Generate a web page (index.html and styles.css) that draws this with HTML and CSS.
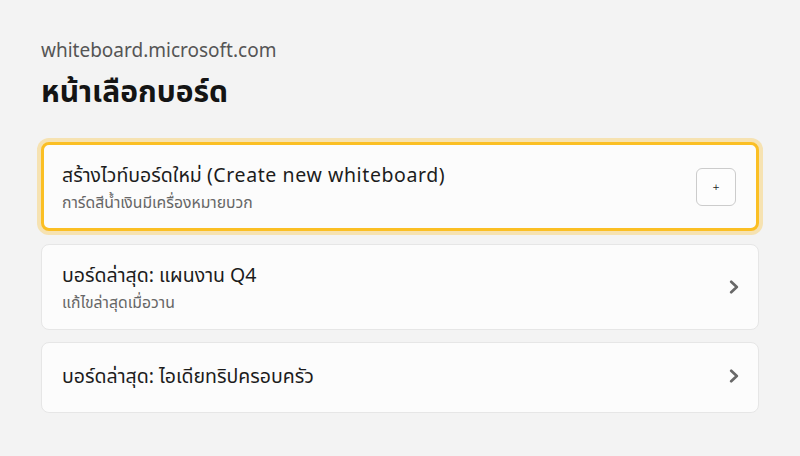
FILE: index.html
```html
<!DOCTYPE html>
<html lang="th">
<head>
<meta charset="utf-8">
<title>หน้าเลือกบอร์ด</title>
<link rel="stylesheet" href="styles.css">
</head>
<body>
<main class="page">
  <div class="domain">whiteboard.microsoft.com</div>
  <h1 class="heading">หน้าเลือกบอร์ด</h1>
  <ul class="list">
    <li class="card card-new">
      <div class="text">
        <div class="title">สร้างไวท์บอร์ดใหม่ <span class="latin">(Create new whiteboard)</span></div>
        <div class="sub">การ์ดสีน้ำเงินมีเครื่องหมายบวก</div>
      </div>
      <button class="add" type="button">+</button>
    </li>
    <li class="card">
      <div class="text">
        <div class="title">บอร์ดล่าสุด: แผนงาน Q4</div>
        <div class="sub">แก้ไขล่าสุดเมื่อวาน</div>
      </div>
      <svg class="chev" width="10" height="14" viewBox="0 0 10 14" aria-hidden="true"><path d="M2.2 1.8 L7.8 7 L2.2 12.2" fill="none" stroke="#686868" stroke-width="2.7" stroke-linecap="round" stroke-linejoin="round"/></svg>
    </li>
    <li class="card card-single">
      <div class="text">
        <div class="title">บอร์ดล่าสุด: ไอเดียทริปครอบครัว</div>
      </div>
      <svg class="chev" width="10" height="14" viewBox="0 0 10 14" aria-hidden="true"><path d="M2.2 1.8 L7.8 7 L2.2 12.2" fill="none" stroke="#686868" stroke-width="2.7" stroke-linecap="round" stroke-linejoin="round"/></svg>
    </li>
  </ul>
</main>
</body>
</html>
```
FILE: styles.css
```css
html, body {
  margin: 0;
  padding: 0;
  background: #f3f3f3;
}
body {
  font-family: "Noto Sans", "Noto Sans Thai", sans-serif;
  color: #1c1c1c;
}
.page {
  padding: 38px 41px 0 41px;
}
.domain {
  font-size: 19px;
  line-height: 24px;
  color: #555555;
}
.heading {
  margin: 11px 0 0 0;
  font-size: 30px;
  line-height: 36px;
  font-weight: 700;
  color: #141414;
}
.list {
  list-style: none;
  margin: 33px 0 0 0;
  padding: 0;
  display: flex;
  flex-direction: column;
  gap: 12px;
}
.card {
  display: flex;
  align-items: center;
  justify-content: space-between;
  background: #fcfcfc;
  border: 1px solid #e6e6e6;
  border-radius: 8px;
  padding: 15px 19px 16px 20px;
}
.card-new {
  border: 3px solid #fbbf24;
  box-shadow: 0 0 0 4px rgba(251, 191, 36, 0.32);
  padding: 15px 20px 15px 18px;
  margin-bottom: 1px;
}
.card-single {
  padding: 18px 19px 22px 20px;
}
.title {
  font-size: 19.5px;
  line-height: 29px;
  color: #1c1c1c;
}
.latin {
  letter-spacing: 0.6px;
}
.sub {
  margin-top: 2px;
  font-size: 15.75px;
  line-height: 22px;
  color: #666666;
}
.add {
  width: 40px;
  height: 38px;
  border: 1px solid #cccccc;
  border-radius: 6px;
  background: #fdfdfd;
  font-family: "DejaVu Sans", sans-serif;
  font-size: 9px;
  color: #222;
  padding: 0;
  display: flex;
  align-items: center;
  justify-content: center;
}
.chev {
  display: block;
}
```
